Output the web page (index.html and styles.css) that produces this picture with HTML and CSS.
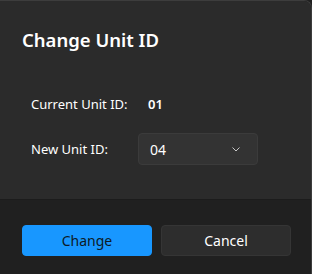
FILE: index.html
```html
<!DOCTYPE html>
<html lang="en">
<head>
    <meta charset="UTF-8">
    <title>Change Unit ID</title>
    <link rel="stylesheet" href="styles.css">
</head>
<body>
    <div class="dialog">
        <div class="dialog-body">
            <h2>Change Unit ID</h2>
            <div class="fields">
                <div class="field">
                    <span class="label">Current Unit ID:</span>
                    <span class="value">01</span>
                </div>
                <div class="field">
                    <span class="label">New Unit ID:</span>
                    <div class="combo">
                        <span>04</span>
                        <svg width="8" height="5" viewBox="0 0 8 5">
                            <path d="M0.8 0.8 L4 4 L7.2 0.8" fill="none" stroke="#c8c8c8" stroke-width="1" stroke-linecap="round" stroke-linejoin="round"/>
                        </svg>
                    </div>
                </div>
            </div>
        </div>
        <div class="dialog-footer">
            <button class="btn primary">Change</button>
            <button class="btn">Cancel</button>
        </div>
    </div>
</body>
</html>
```

FILE: styles.css
```css
body {
    margin: 0;
    background-color: #202020;
    font-family: "Noto Sans", "Open Sans", sans-serif;
    color: #ffffff;
}
.dialog {
    height: 274px;
    box-sizing: border-box;
    border-top: 1px solid #3d3d3d;
    border-right: 1px solid #3d3d3d;
    border-radius: 0 8px 0 0;
    overflow: hidden;
    display: flex;
    flex-direction: column;
}
.dialog-body {
    background-color: #2b2b2b;
    padding: 25px 22px 0 22px;
    height: 173px;
}
h2 {
    margin: 0;
    font-size: 18.5px;
    font-weight: 600;
    line-height: 28px;
}
.fields {
    margin-top: 40px;
    padding-left: 9px;
}
.field {
    display: flex;
    align-items: center;
    font-size: 13px;
}
.field + .field {
    margin-top: 19px;
}
.label {
    width: 107px;
}
.value {
    margin-left: 10px;
    font-weight: 600;
    line-height: 20px;
}
.combo {
    width: 120px;
    height: 32px;
    box-sizing: border-box;
    background-color: #333333;
    border: 1px solid #3b3b3b;
    border-radius: 4px;
    display: flex;
    align-items: center;
    justify-content: space-between;
    padding: 0 17px 0 11px;
    font-size: 14px;
}
.dialog-footer {
    flex: 1;
    background-color: #202020;
    border-top: 1px solid #1c1c1c;
    display: flex;
    gap: 9px;
    padding: 25px 20px 0 22px;
}
.btn {
    flex: 1;
    height: 31px;
    border: 1px solid #353535;
    border-radius: 4px;
    background-color: #2d2d2d;
    color: #ffffff;
    font-family: inherit;
    font-size: 14px;
}
.primary {
    background-color: #1897ff;
    border-color: #1897ff;
    color: #0d1a26;
}
```
